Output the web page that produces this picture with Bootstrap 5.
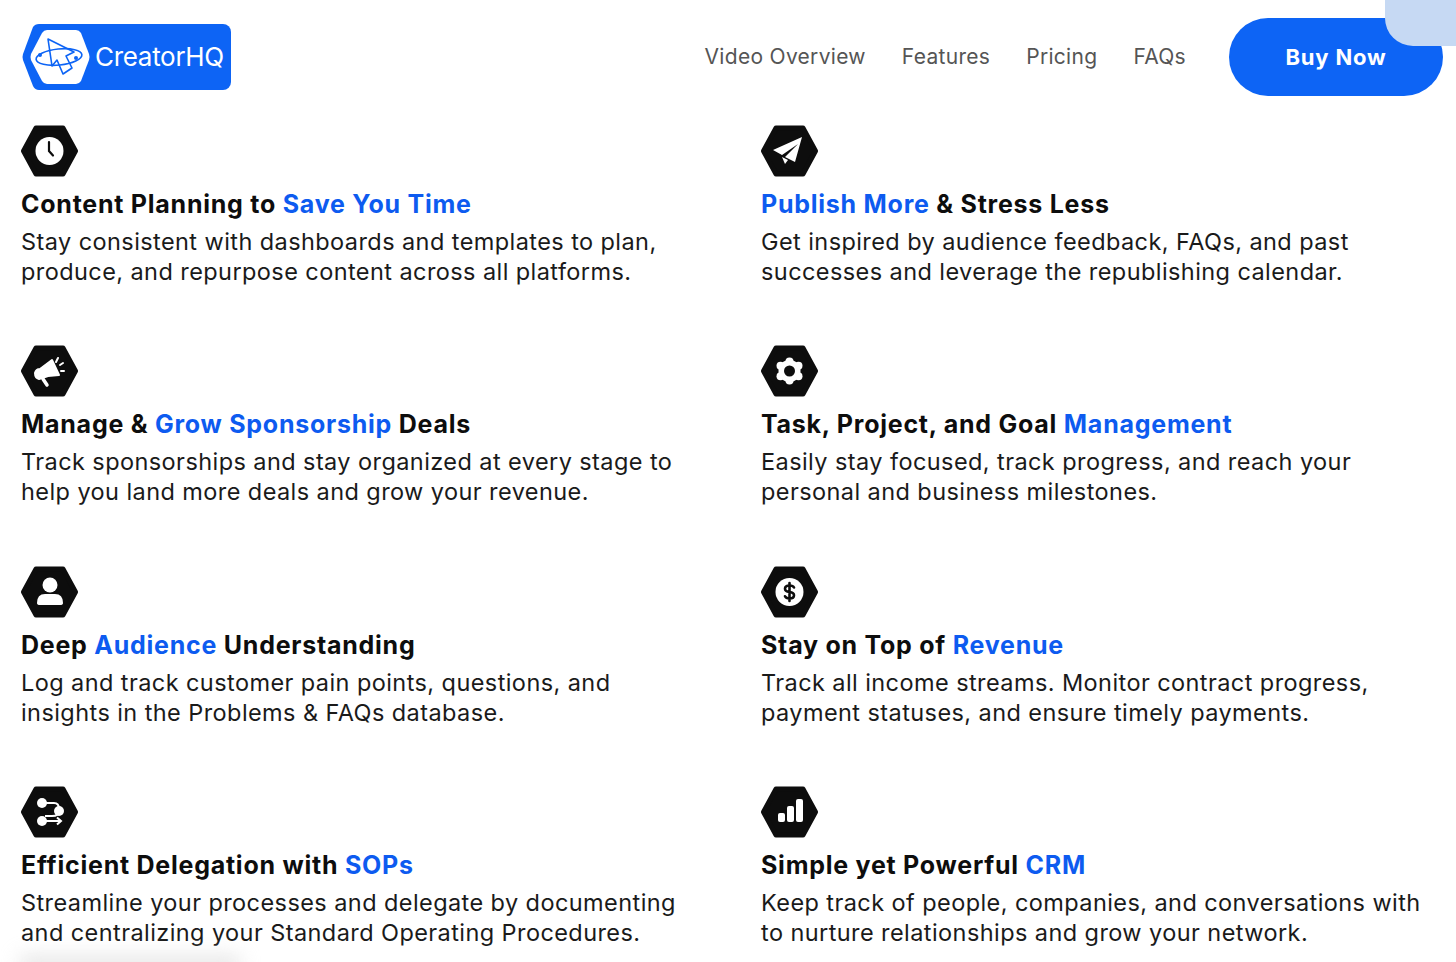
<!DOCTYPE html>
<html lang="en">
<head>
  <meta charset="UTF-8" />
  <meta name="viewport" content="width=device-width, initial-scale=1" />
  <title>CreatorHQ</title>
  <link href="https://cdn.jsdelivr.net/npm/bootstrap@5.3.3/dist/css/bootstrap.min.css" rel="stylesheet" />
  <style>
    html, body { height: 962px; overflow: hidden; }
    body {
      background: #fff;
      color: #0d0d0d;
      font-family: Inter, "Liberation Sans", sans-serif;
    }

    /* Header */
    .top-bar {
      height: 114px;
      padding: 18px 13px 18px 22px;
    }
    .logo-wrap { width: 209px; height: 66px; }
    .logo-hex { width: 70px; height: 66px; flex: none; }
    .logo-body {
      background: #0d64f5;
      border-radius: 0 8px 8px 0;
      color: #fff;
      font-size: 26px;
      letter-spacing: -.3px;
      padding: 0 0 2px 3px;
    }
    .top-link {
      color: #555;
      font-size: 21px;
      letter-spacing: .3px;
      text-decoration: none;
    }
    .top-links { gap: 36px; margin-right: 43px; }
    .buy-btn {
      width: 214px;
      height: 78px;
      border-radius: 39px;
      background: #0d64f5;
      color: #fff;
      font-size: 22px;
      font-weight: 700;
      letter-spacing: .8px;
      border: 0;
    }
    .corner-tab {
      position: absolute;
      top: 0;
      right: 0;
      width: 71px;
      height: 46px;
      background: #c6d9f3;
      border-bottom-left-radius: 28px;
    }

    /* Feature grid */
    .feature-grid {
      display: grid;
      grid-template-columns: 740px 1fr;
      grid-auto-rows: 220.4px;
      padding: 11px 0 0 21px;
    }
    .hex-icon { width: 57px; height: 52px; display: block; }
    .feature-title {
      font-size: 25px;
      font-weight: 700;
      letter-spacing: .75px;
      line-height: 30px;
      margin: 12px 0 8px;
      color: #0d0d0d;
    }
    .feature-title span { color: #0d5bf0; }
    .feature-text {
      font-size: 23.5px;
      letter-spacing: .42px;
      line-height: 30px;
      margin: 0;
      color: #1a1a1a;
    }
    .bottom-glow {
      position: absolute;
      left: 20px;
      bottom: -14px;
      width: 220px;
      height: 20px;
      background: #ccc;
      filter: blur(10px);
      opacity: .5;
    }
  </style>
</head>
<body class="position-relative">

<!-- Header -->
<header class="top-bar d-flex align-items-center justify-content-between">
  <a class="logo-wrap d-flex text-decoration-none" href="#">
    <svg class="logo-hex" viewBox="0 0 70 66">
      <path d="M70 0H17Q13 0 11 3L1 30Q0 33 1 36L11 62Q13 66 17 66H70Z" fill="#0d64f5"/>
      <path d="M25 6H54Q57 6 59 9L67 30Q68 33 67 36L59 57Q57 60 54 60H25Q22 60 20 57L9 36Q8 33 9 30L20 9Q22 6 25 6Z" fill="#fff"/>
      <g fill="none" stroke="#0d64f5" stroke-width="1.6" stroke-linejoin="round">
        <path d="M26 15L30 42L35 36L41 50L50 44L44 32L52 28Z"/>
        <ellipse cx="37" cy="33" rx="23" ry="8" transform="rotate(-6 37 33)"/>
      </g>
      <circle cx="18" cy="31" r="2" fill="#0d64f5"/>
      <circle cx="54" cy="34" r="2" fill="#0d64f5"/>
    </svg>
    <div class="logo-body flex-grow-1 d-flex align-items-center">CreatorHQ</div>
  </a>
  <div class="d-flex align-items-center">
    <nav class="top-links d-flex">
      <a class="top-link" href="#">Video Overview</a>
      <a class="top-link" href="#">Features</a>
      <a class="top-link" href="#">Pricing</a>
      <a class="top-link" href="#">FAQs</a>
    </nav>
    <button class="buy-btn btn" type="button">Buy Now</button>
  </div>
</header>
<div class="corner-tab"></div>

<!-- Features -->
<main class="feature-grid">
  <section>
    <svg class="hex-icon" viewBox="0 0 57 52"><path d="M15 3H42L54.500 26L42 49H15L2.500 26Z" fill="#0d0d0d" stroke="#0d0d0d" stroke-width="5" stroke-linejoin="round"/><circle cx="28.500" cy="26" r="14" fill="#fff"/><path d="M28 17V26L32 30.500" fill="none" stroke="#0d0d0d" stroke-width="2.200" stroke-linecap="round"/></svg>
    <h3 class="feature-title">Content Planning to <span>Save You Time</span></h3>
    <p class="feature-text">Stay consistent with dashboards and templates to plan,<br>produce, and repurpose content across all platforms.</p>
  </section>
  <section>
    <svg class="hex-icon" viewBox="0 0 57 52"><path d="M15 3H42L54.500 26L42 49H15L2.500 26Z" fill="#0d0d0d" stroke="#0d0d0d" stroke-width="5" stroke-linejoin="round"/><path d="M41 12L12 25L21 30L37 19L24 32L34 37Z" fill="#fff"/><path d="M21 32L24 39L27 35Z" fill="#fff"/></svg>
    <h3 class="feature-title"><span>Publish More</span> &amp; Stress Less</h3>
    <p class="feature-text">Get inspired by audience feedback, FAQs, and past<br>successes and leverage the republishing calendar.</p>
  </section>
  <section>
    <svg class="hex-icon" viewBox="0 0 57 52"><path d="M15 3H42L54.500 26L42 49H15L2.500 26Z" fill="#0d0d0d" stroke="#0d0d0d" stroke-width="5" stroke-linejoin="round"/><path d="M31 15L38 30L27 31L18 34Q14 33 14 28Q15 24 19 24Z" fill="#fff" stroke="#fff" stroke-width="2" stroke-linejoin="round"/><path d="M22 34L26 40" stroke="#fff" stroke-width="3.500" stroke-linecap="round"/><path d="M37 13L35 17M42 18L39 20M43 26H40" stroke="#fff" stroke-width="2" stroke-linecap="round"/></svg>
    <h3 class="feature-title">Manage &amp; <span>Grow Sponsorship</span> Deals</h3>
    <p class="feature-text">Track sponsorships and stay organized at every stage to<br>help you land more deals and grow your revenue.</p>
  </section>
  <section>
    <svg class="hex-icon" viewBox="0 0 57 52"><path d="M15 3H42L54.500 26L42 49H15L2.500 26Z" fill="#0d0d0d" stroke="#0d0d0d" stroke-width="5" stroke-linejoin="round"/><g fill="#fff"><circle cx="28.500" cy="26" r="11"/><circle cx="28.500" cy="16.500" r="4"/><circle cx="28.500" cy="35.500" r="4"/><circle cx="19.500" cy="20.800" r="4"/><circle cx="37.500" cy="20.800" r="4"/><circle cx="19.500" cy="31.200" r="4"/><circle cx="37.500" cy="31.200" r="4"/></g><circle cx="28.500" cy="26" r="5.500" fill="#0d0d0d"/></svg>
    <h3 class="feature-title">Task, Project, and Goal <span>Management</span></h3>
    <p class="feature-text">Easily stay focused, track progress, and reach your<br>personal and business milestones.</p>
  </section>
  <section>
    <svg class="hex-icon" viewBox="0 0 57 52"><path d="M15 3H42L54.500 26L42 49H15L2.500 26Z" fill="#0d0d0d" stroke="#0d0d0d" stroke-width="5" stroke-linejoin="round"/><circle cx="29" cy="19" r="7.500" fill="#fff"/><path d="M16 37Q16 28 24 28H34Q42 28 42 37Q42 39 39 39H19Q16 39 16 37Z" fill="#fff"/></svg>
    <h3 class="feature-title">Deep <span>Audience</span> Understanding</h3>
    <p class="feature-text">Log and track customer pain points, questions, and<br>insights in the Problems &amp; FAQs database.</p>
  </section>
  <section>
    <svg class="hex-icon" viewBox="0 0 57 52"><path d="M15 3H42L54.500 26L42 49H15L2.500 26Z" fill="#0d0d0d" stroke="#0d0d0d" stroke-width="5" stroke-linejoin="round"/><circle cx="28.500" cy="26" r="14" fill="#fff"/><path d="M33 21.500Q32 19.500 28.500 19.500Q24 19.500 24 22.800Q24 25.500 28.500 26Q33 26.500 33 29.300Q33 32.500 28.500 32.500Q25 32.500 24 30.300M28.500 17V35" fill="none" stroke="#0d0d0d" stroke-width="2.600" stroke-linecap="round"/></svg>
    <h3 class="feature-title">Stay on Top of <span>Revenue</span></h3>
    <p class="feature-text">Track all income streams. Monitor contract progress,<br>payment statuses, and ensure timely payments.</p>
  </section>
  <section>
    <svg class="hex-icon" viewBox="0 0 57 52"><path d="M15 3H42L54.500 26L42 49H15L2.500 26Z" fill="#0d0d0d" stroke="#0d0d0d" stroke-width="5" stroke-linejoin="round"/><circle cx="21" cy="17" r="5" fill="#fff"/><circle cx="38" cy="25" r="5" fill="#fff"/><circle cx="21" cy="35" r="5" fill="#fff"/><path d="M21 17H33Q38 17 38 23" fill="none" stroke="#fff" stroke-width="2"/><path d="M38 25Q38 30 31 30H24" fill="none" stroke="#fff" stroke-width="2"/><path d="M24 35H40M36 31.500L40 35L36 38.500" fill="none" stroke="#fff" stroke-width="2"/></svg>
    <h3 class="feature-title">Efficient Delegation with <span>SOPs</span></h3>
    <p class="feature-text">Streamline your processes and delegate by documenting<br>and centralizing your Standard Operating Procedures.</p>
  </section>
  <section>
    <svg class="hex-icon" viewBox="0 0 57 52"><path d="M15 3H42L54.500 26L42 49H15L2.500 26Z" fill="#0d0d0d" stroke="#0d0d0d" stroke-width="5" stroke-linejoin="round"/><g fill="#fff"><rect x="17" y="27" width="7" height="9" rx="2"/><rect x="26" y="20" width="7" height="16" rx="2"/><rect x="35" y="13" width="7" height="23" rx="2"/></g></svg>
    <h3 class="feature-title">Simple yet Powerful <span>CRM</span></h3>
    <p class="feature-text">Keep track of people, companies, and conversations with<br>to nurture relationships and grow your network.</p>
  </section>
</main>
<div class="bottom-glow"></div>

<script src="https://cdn.jsdelivr.net/npm/bootstrap@5.3.3/dist/js/bootstrap.bundle.min.js"></script>
</body>
</html>
